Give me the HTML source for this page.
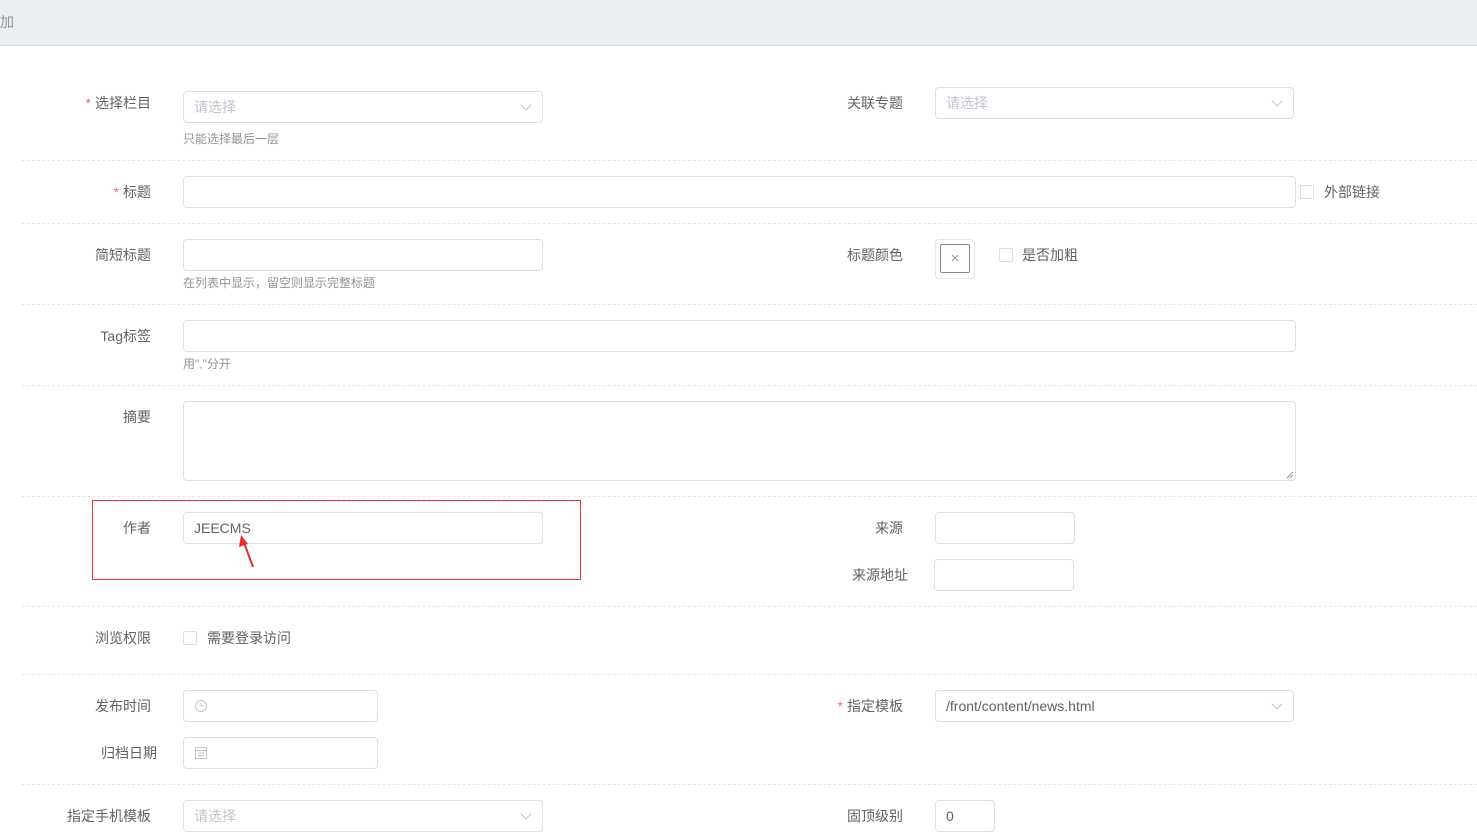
<!DOCTYPE html>
<html><head><meta charset="utf-8"><style>
*{box-sizing:border-box;margin:0;padding:0}
body{width:1477px;height:831px;overflow:hidden;background:#fff;font-family:"Liberation Sans","Noto Sans CJK SC",sans-serif;font-size:14px;color:#606266;position:relative}
.a{position:absolute}
.top{left:0;top:0;width:1477px;height:46px;background:#eaedf1;border-bottom:1px solid #dcdfe6}
.lbl{position:absolute;text-align:right;line-height:20px;font-size:14px;color:#606266;white-space:nowrap}
.star{color:#f56c6c;margin-right:4px}
.in{position:absolute;border:1px solid #dcdfe6;border-radius:4px;background:#fff;height:32px;line-height:30px;padding-left:10px;font-size:14px;color:#606266}
.ph{color:#c0c4cc}
.hint{position:absolute;font-size:12px;color:#909399;line-height:14px}
.sep{position:absolute;left:22px;width:1455px;border-top:1px dashed #e4e7ed;height:0}
.cb{position:absolute;width:14px;height:14px;border:1px solid #dcdfe6;border-radius:2px;background:#fff}
.arr{position:absolute;right:12px;top:9px;width:8px;height:8px;border-right:1px solid #c0c4cc;border-bottom:1px solid #c0c4cc;transform:rotate(45deg)}
</style></head><body>
<div class="a top"><span class="a" style="left:0;top:12px;font-size:14px;color:#909399">加</span></div>

<div class="lbl" style="right:1326px;top:93px"><span class="star">*</span>选择栏目</div>
<div class="in ph" style="left:183px;top:91px;width:360px">请选择<span class="arr"></span></div>
<div class="hint" style="left:183px;top:132px">只能选择最后一层</div>
<div class="lbl" style="right:574px;top:93px">关联专题</div>
<div class="in ph" style="left:935px;top:87px;width:359px">请选择<span class="arr"></span></div>
<div class="sep" style="top:160px"></div>

<div class="lbl" style="right:1326px;top:182px"><span class="star">*</span>标题</div>
<div class="in" style="left:183px;top:176px;width:1113px"></div>
<div class="cb" style="left:1300px;top:185px"></div>
<div class="lbl" style="left:1324px;top:182px">外部链接</div>
<div class="sep" style="top:223px"></div>

<div class="lbl" style="right:1326px;top:245px">简短标题</div>
<div class="in" style="left:183px;top:239px;width:360px"></div>
<div class="hint" style="left:183px;top:276px">在列表中显示，留空则显示完整标题</div>
<div class="lbl" style="right:574px;top:245px">标题颜色</div>
<div class="a" style="left:935px;top:239px;width:40px;height:40px;border:1px solid #e6e6e6;border-radius:4px"></div>
<div class="a" style="left:940px;top:244px;width:30px;height:29px;border:1px solid #888;border-radius:2px;text-align:center;line-height:27px;color:#999;font-size:15px">×</div>
<div class="cb" style="left:999px;top:248px"></div>
<div class="lbl" style="left:1022px;top:245px">是否加粗</div>
<div class="sep" style="top:304px"></div>

<div class="lbl" style="right:1326px;top:326px">Tag标签</div>
<div class="in" style="left:183px;top:320px;width:1113px"></div>
<div class="hint" style="left:183px;top:357px">用","分开</div>
<div class="sep" style="top:385px"></div>

<div class="lbl" style="right:1326px;top:407px">摘要</div>
<div class="in" style="left:183px;top:401px;width:1113px;height:80px"><svg class="a" style="right:1px;bottom:1px" width="8" height="8"><path d="M1 7L7 1M4 7L7 4" stroke="#999"/></svg></div>
<div class="sep" style="top:496px"></div>

<div class="a" style="left:92px;top:500px;width:489px;height:80px;border:1px solid #e0323a"></div>
<div class="lbl" style="right:1326px;top:518px">作者</div>
<div class="in" style="left:183px;top:512px;width:360px">JEECMS</div>
<svg class="a" style="left:236px;top:535px" width="20" height="34"><path d="M17 32 L7 5" stroke="#e52d2d" stroke-width="2"/><path d="M5 0 L3 12 L12 9 Z" fill="#e52d2d"/></svg>
<div class="lbl" style="right:574px;top:518px">来源</div>
<div class="in" style="left:935px;top:512px;width:140px"></div>
<div class="lbl" style="right:569px;top:565px">来源地址</div>
<div class="in" style="left:934px;top:559px;width:140px"></div>
<div class="sep" style="top:606px"></div>

<div class="lbl" style="right:1326px;top:628px">浏览权限</div>
<div class="cb" style="left:183px;top:631px"></div>
<div class="lbl" style="left:207px;top:628px">需要登录访问</div>
<div class="sep" style="top:674px"></div>

<div class="lbl" style="right:1326px;top:696px">发布时间</div>
<div class="in" style="left:183px;top:690px;width:195px"><svg class="a" style="left:10px;top:8px" width="14" height="14"><circle cx="7" cy="7" r="5.5" fill="none" stroke="#c0c4cc"/><path d="M7 4v3h2.5" fill="none" stroke="#c0c4cc"/></svg></div>
<div class="lbl" style="right:1320px;top:743px">归档日期</div>
<div class="in" style="left:183px;top:737px;width:195px"><svg class="a" style="left:10px;top:8px" width="14" height="14"><rect x="1.5" y="1.5" width="11" height="11" fill="none" stroke="#c0c4cc"/><path d="M1.5 4.5h11M4 7h6M4 9.5h6" stroke="#c0c4cc"/></svg></div>
<div class="lbl" style="right:574px;top:696px"><span class="star">*</span>指定模板</div>
<div class="in" style="left:935px;top:690px;width:359px">/front/content/news.html<span class="arr"></span></div>
<div class="sep" style="top:784px"></div>

<div class="lbl" style="right:1326px;top:806px">指定手机模板</div>
<div class="in ph" style="left:183px;top:800px;width:360px">请选择<span class="arr"></span></div>
<div class="lbl" style="right:574px;top:806px">固顶级别</div>
<div class="in" style="left:935px;top:800px;width:60px">0</div>
</body></html>
